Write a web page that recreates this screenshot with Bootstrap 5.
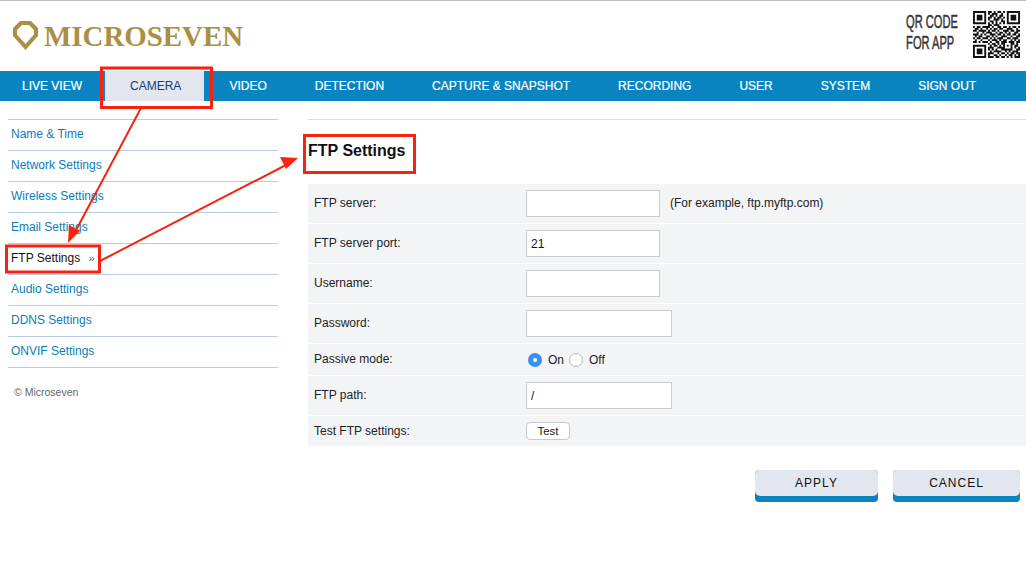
<!DOCTYPE html>
<html lang="en">
<head>
<meta charset="utf-8">
<title>FTP Settings</title>
<link href="https://cdn.jsdelivr.net/npm/bootstrap@5.3.0/dist/css/bootstrap.min.css" rel="stylesheet">
<style>
html,body{height:565px;overflow:hidden}
body{font-family:"Liberation Sans",Arial,sans-serif;font-size:12px;color:#222;background:#fff;position:relative}
.page-top{height:71px;border-top:1px solid #bbb;padding:0 6px 0 13px}
.logo-icon{margin-top:-2px}
.logo-word{font-family:"Liberation Serif",serif;font-weight:700;font-size:28.9px;line-height:1;color:#aa9044;margin-left:6px;margin-top:0}
.qr-text{font-size:18.2px;line-height:21px;color:#333;margin-right:15px;margin-top:-6px;transform:scaleX(.61);transform-origin:right center;-webkit-text-stroke:.5px #333;white-space:nowrap}
.qr-box{margin-bottom:4px}
.main-bar{height:30px;background:#0a84c1}
.main-link{display:block;line-height:30px;height:30px;padding:0 24px;color:#fff;font-size:12px;-webkit-text-stroke:.2px #fff;text-decoration:none;white-space:nowrap}
.main-link:hover{color:#fff}
.main-link.is-on{background:#e1e6ef;color:#1d3a72;-webkit-text-stroke:0;padding:0 23px 0 25px}
.main-list{margin:0 0 0 -2px}
.main-list li:nth-child(2){margin:0 1px 0 -1px}
.side-col{width:278px;padding:18px 0 0 8px;flex:none}
.side-item{display:block;height:31px;line-height:28px;padding-left:3px;border-top:1px solid #b9cbe6;color:#0a7dbb;text-decoration:none;font-size:12px}
.side-item:hover{color:#0a7dbb}
.side-item.is-on{color:#111}
.side-item.is-on span{color:#666;margin-left:5px;font-size:11px}
.side-end{border-top:1px solid #b9cbe6}
.copy-note{font-size:10.5px;color:#666;padding:18px 0 0 6px;line-height:13px}
.form-col{padding:18px 0 0 30px;flex:1 1 auto;min-width:0}
.form-rule{border-top:1px solid #ddd;height:1px}
.form-title{font-size:16px;font-weight:700;color:#111;line-height:20px;margin:21px 0 0;height:43px}
.set-row{display:flex;align-items:center;background:#f3f4f6;margin-bottom:1px;height:39px}
.set-row.r-short{height:31px}
.set-row.r-last{height:30px;margin:0}
.set-label{width:218px;padding:0 0 2px 6px;flex:none;color:#222}
.r-last .set-label{padding-bottom:0}
.set-input{width:134px;height:27px;border:1px solid #ccc;background:#fff;padding:0 4px;font:12px "Liberation Sans",sans-serif;color:#111;border-radius:0;outline:0}
.set-input.wide{width:146px}
.set-hint{margin:0 0 2px 10px}
.radio-set{padding-left:2px}
.radio-on,.radio-off{width:14px;height:14px;border-radius:50%;display:inline-block;flex:none}
.radio-on{background:#3b8ff0;position:relative}
.radio-on::after{content:"";position:absolute;left:5px;top:5px;width:4px;height:4px;border-radius:50%;background:#fff}
.radio-off{background:#fff;border:1px solid #bbb;margin-left:5px}
.radio-name{margin-left:6px}
.test-btn{width:44px;height:18px;border:1px solid #c8c8c8;border-radius:4px;background:#fff;font:11.5px "Liberation Sans",sans-serif;color:#222;padding:0;line-height:15px}
.foot-btn{height:32px;border:0;border-radius:4px;font:12px "Liberation Sans",sans-serif;letter-spacing:1px;color:#111;padding:0 0 6px;position:relative;overflow:hidden;background:#0a84c1;z-index:0}
.foot-btn::before{content:"";position:absolute;inset:0 0 6px 0;background:#e1e6ef;border-radius:0 0 5px 5px;z-index:-1}
.btn-apply{width:123px}
.btn-cancel{width:127px}
.foot-row{padding-top:24px;padding-right:6px;gap:15px}
.marks{position:absolute;left:0;top:0;width:1026px;height:565px;pointer-events:none}
</style>
</head>
<body>
<header class="page-top d-flex justify-content-between align-items-center">
  <div class="d-flex align-items-center">
    <svg class="logo-icon" width="25" height="31" viewBox="0 0 25 31" aria-hidden="true"><path fill-rule="evenodd" fill="#aa9044" d="M7 1H18L25 8V16L12.500 30L0 16V8zM9 5L4 10V14.500L12.500 24L21 14.500V10L16 5z"/></svg>
    <div class="logo-word">MICROSEVEN</div>
  </div>
  <div class="d-flex align-items-center">
    <div class="qr-text">QR CODE<br>FOR APP</div>
    <svg class="qr-box" id="qrcode" width="47" height="47" viewBox="0 0 25 25" aria-label="QR code"><path id="qrpath" fill="none" stroke="#111" stroke-width="1"/></svg>
  </div>
</header>
<nav class="main-bar">
  <ul class="main-list list-unstyled d-flex">
    <li><a class="main-link" href="#">LIVE VIEW</a></li>
    <li><a class="main-link is-on" href="#">CAMERA</a></li>
    <li><a class="main-link" href="#">VIDEO</a></li>
    <li><a class="main-link" href="#">DETECTION</a></li>
    <li><a class="main-link" href="#">CAPTURE &amp; SNAPSHOT</a></li>
    <li><a class="main-link" href="#">RECORDING</a></li>
    <li><a class="main-link" href="#">USER</a></li>
    <li><a class="main-link" href="#">SYSTEM</a></li>
    <li><a class="main-link" href="#">SIGN OUT</a></li>
  </ul>
</nav>
<div class="d-flex">
  <aside class="side-col">
    <a class="side-item" href="#">Name &amp; Time</a>
    <a class="side-item" href="#">Network Settings</a>
    <a class="side-item" href="#">Wireless Settings</a>
    <a class="side-item" href="#">Email Settings</a>
    <a class="side-item is-on" href="#">FTP Settings <span>»</span></a>
    <a class="side-item" href="#">Audio Settings</a>
    <a class="side-item" href="#">DDNS Settings</a>
    <a class="side-item" href="#">ONVIF Settings</a>
    <div class="side-end"></div>
    <div class="copy-note">© Microseven</div>
  </aside>
  <main class="form-col">
    <div class="form-rule"></div>
    <h1 class="form-title">FTP Settings</h1>
    <div class="set-row"><div class="set-label">FTP server:</div><input class="set-input" type="text"><span class="set-hint">(For example, ftp.myftp.com)</span></div>
    <div class="set-row"><div class="set-label">FTP server port:</div><input class="set-input" type="text" value="21"></div>
    <div class="set-row"><div class="set-label">Username:</div><input class="set-input" type="text"></div>
    <div class="set-row"><div class="set-label">Password:</div><input class="set-input wide" type="password"></div>
    <div class="set-row r-short"><div class="set-label">Passive mode:</div><div class="d-flex align-items-center radio-set"><span class="radio-on"></span><span class="radio-name">On</span><span class="radio-off"></span><span class="radio-name">Off</span></div></div>
    <div class="set-row"><div class="set-label">FTP path:</div><input class="set-input wide" type="text" value="/"></div>
    <div class="set-row r-last"><div class="set-label">Test FTP settings:</div><button class="test-btn" type="button">Test</button></div>
    <div class="d-flex justify-content-end foot-row">
      <button class="foot-btn btn-apply" type="button">APPLY</button>
      <button class="foot-btn btn-cancel" type="button">CANCEL</button>
    </div>
  </main>
</div>
<svg class="marks" viewBox="0 0 1026 565" aria-hidden="true">
  <g fill="none" stroke="#f5230f" stroke-width="3">
    <rect x="101.500" y="68" width="110" height="39.500"/>
    <rect x="6.500" y="246" width="93" height="26"/>
    <rect x="304.500" y="135.500" width="110" height="37"/>
  </g>
  <g stroke="#f5230f" stroke-width="2" fill="#f5230f">
    <line x1="141" y1="108" x2="74" y2="234"/>
    <path d="M68 243l1-18 11 6z" stroke="none"/>
    <line x1="100" y1="261" x2="286" y2="165"/>
    <path d="M298 158l-18-1 6 12z" stroke="none"/>
  </g>
</svg>
<script src="https://cdn.jsdelivr.net/npm/bootstrap@5.3.0/dist/js/bootstrap.bundle.min.js"></script>
<script>
var rows=[
"1111111011010110101111111",
"1000001010111001001000001",
"1011101001101011001011101",
"1011101011010110101011101",
"1011101010011101001011101",
"1000001001101001101000001",
"1111111010101010101111111",
"0000000011011100000000000",
"1011011110100110110101101",
"0110100101011011001110010",
"1101111010110100111011011",
"0010010111001011010100110",
"1110101001110110101101101",
"0101100110101001110010011",
"1011011101010111001101110",
"0100100010111010110010101",
"1101011101001101110111011",
"0000000010110101100011010",
"1111111001011010101010110",
"1000001011100111100010101",
"1011101010101001111110011",
"1011101001011110010101110",
"1011101011100101101011011",
"1000001010011010010110101",
"1111111011101101101010111"];
var d="";
rows.forEach(function(r,y){var x=0;while(x<25){if(r[x]==="1"){var s=x;while(x<25&&r[x]==="1")x++;d+="M"+s+" "+(y+.5)+"H"+x;}else x++;}});
document.getElementById("qrpath").setAttribute("d",d);
</script>
</body>
</html>
